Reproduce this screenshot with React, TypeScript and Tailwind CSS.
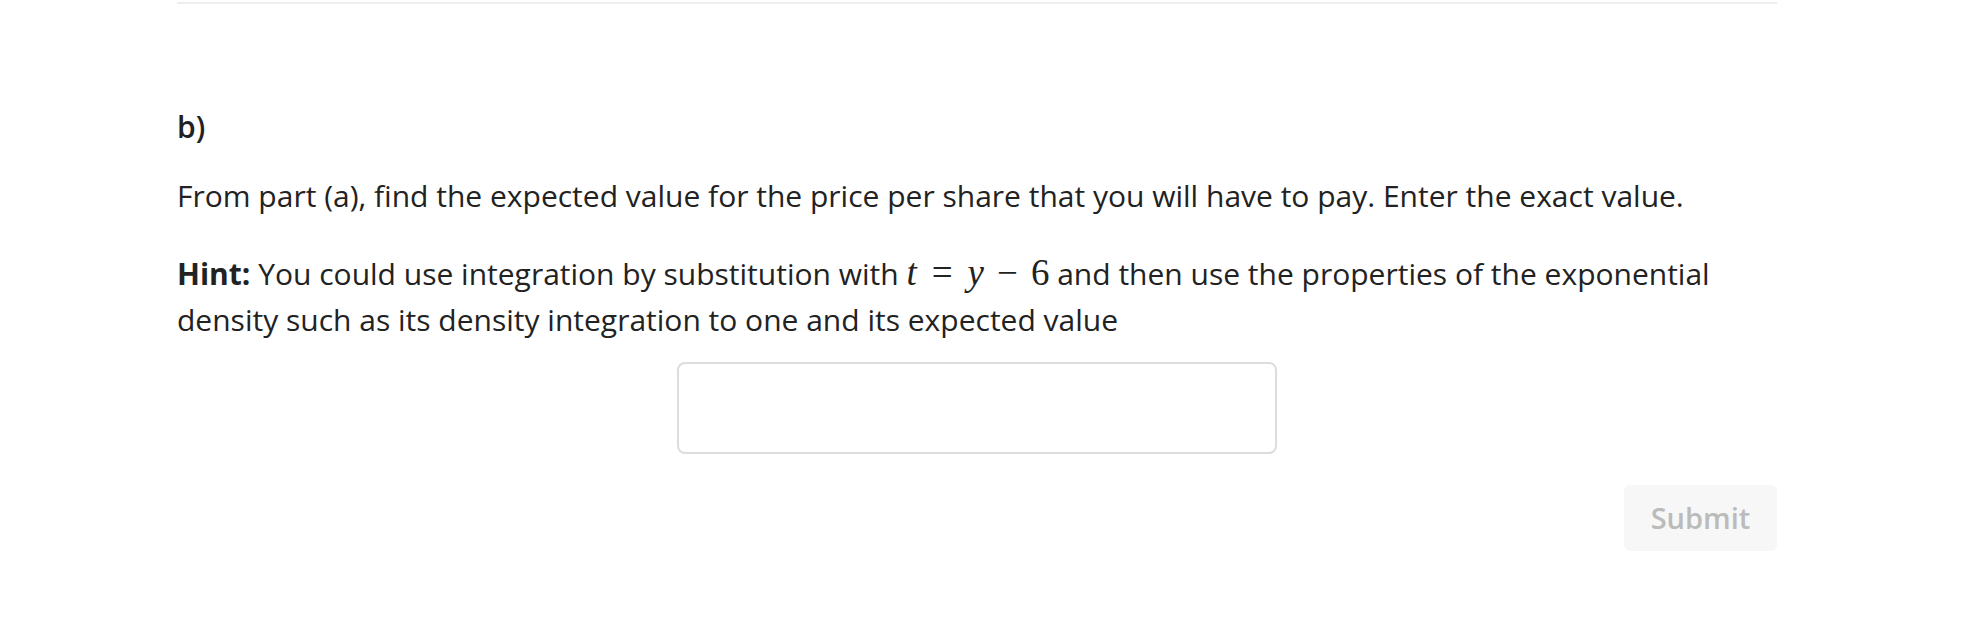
import React from "react";

export default function App() {
  return (
    <div className="w-[1978px] h-[640px] bg-white overflow-hidden" style={{ fontFamily: '"Open Sans", sans-serif' }}>
      <div className="ml-[177px] w-[1600px]">
        <div className="mt-[2px] h-[2px] bg-[#eeeeee]" />
        <div className="mt-[103px] text-[30px] leading-[40px] font-semibold text-[#222222]">b)</div>
        <p className="mt-[26px] text-[30px] leading-[46px] text-[#222222]">
          From part (a), find the expected value for the price per share that you will have to pay. Enter the exact value.
        </p>
        <p className="mt-[32px] text-[30px] leading-[46px] text-[#222222]">
          <span className="font-bold">Hint:</span> You could use integration by substitution with{" "}
          <span className="text-[37px] leading-[20px]" style={{ fontFamily: '"Liberation Serif", serif' }}>
            <span className="italic">t</span>
            <span className="mx-[15px]">=</span>
            <span className="italic">y</span>
            <span className="mx-[13px]">−</span>
            <span>6</span>
          </span>{" "}
          and then use the properties of the exponential density such as its density integration to one and its expected value
        </p>
        <div className="mt-[19px] flex justify-center">
          <input
            type="text"
            className="w-[600px] h-[92px] border-2 border-[#dddddd] rounded-[8px] bg-white outline-none"
          />
        </div>
        <div className="mt-[31px] flex justify-end">
          <button className="w-[153px] h-[66px] rounded-[6px] bg-[#f7f7f7] text-[#bbbbbb] text-[29px] font-semibold">
            Submit
          </button>
        </div>
      </div>
    </div>
  );
}
